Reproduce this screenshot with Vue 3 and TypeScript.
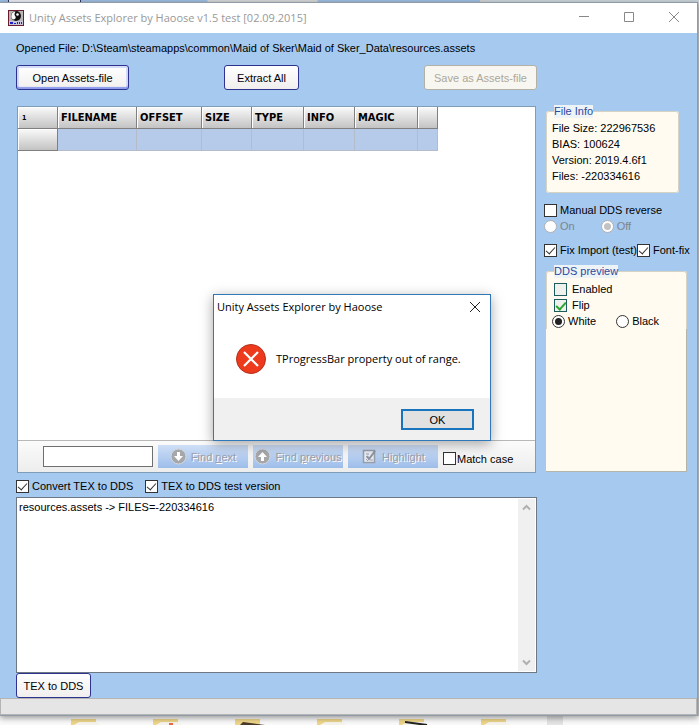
<script setup lang="ts">
import { ref } from 'vue'

interface Column {
  title: string
  width: number
}

const openedFile = 'D:\\Steam\\steamapps\\common\\Maid of Sker\\Maid of Sker_Data\\resources.assets'

const columns: Column[] = [
  { title: 'FILENAME', width: 79 },
  { title: 'OFFSET', width: 65 },
  { title: 'SIZE', width: 50 },
  { title: 'TYPE', width: 52 },
  { title: 'INFO', width: 51 },
  { title: 'MAGIC', width: 63 },
  { title: '', width: 20 },
]

const fileInfo: string[] = [
  'File Size: 222967536',
  'BIAS: 100624',
  'Version: 2019.4.6f1',
  'Files: -220334616',
]

const folders = ['plain', 'red', 'dark', 'plain', 'ink', 'plain']

const search = ref('')
const matchCase = ref(false)
const manualReverse = ref(false)
const reverseMode = ref('off')
const fixImport = ref(true)
const fontFix = ref(true)
const previewEnabled = ref(false)
const previewFlip = ref(true)
const previewBackground = ref('white')
const convertTex = ref(true)
const texTest = ref(true)
const log = ref('resources.assets -> FILES=-220334616')
const errorOpen = ref(true)
</script>

<template>
  <div class="desktop">
    <div class="behind-top" aria-hidden="true">
      <span class="behind-button"></span>
      <span class="behind-button pale"></span>
      <span class="behind-edge"></span>
    </div>

    <main class="window">
      <header class="titlebar">
        <svg class="app-icon" width="16" height="16" viewBox="0 0 16 16" aria-hidden="true">
          <rect x="0.5" y="0.5" width="15" height="15" fill="#b9b4b6" stroke="#6b1c28" />
          <circle cx="8" cy="6" r="5" fill="#111" />
          <path d="M7.500 1.500A4.500 4.500 0 0 0 5 9.500Q8.500 9 7.500 6.500Q5.500 4.500 7.500 1.500Z" fill="#fff" />
          <circle cx="9.500" cy="4.500" r="1.300" fill="#fff" />
          <rect x="1" y="11" width="14" height="4" fill="#c8c6dc" />
          <path d="M2 12h3v2h-3zM6 13h2v1h-2zM9 12h1v2h-1zM11 12h1v2h-1zM13 12h1v2h-1z" fill="#1a22c8" />
        </svg>
        <h1>Unity Assets Explorer by Haoose v1.5 test [02.09.2015]</h1>
        <div class="window-controls">
          <button type="button" aria-label="Minimize">
            <svg width="12" height="12" viewBox="0 0 12 12"><path d="M1 5.500h10" /></svg>
          </button>
          <button type="button" aria-label="Maximize">
            <svg width="12" height="12" viewBox="0 0 12 12"><path d="M1.500 1.500h9v9h-9z" /></svg>
          </button>
          <button type="button" aria-label="Close">
            <svg width="12" height="12" viewBox="0 0 12 12"><path d="M1 1l10 10M11 1L1 11" /></svg>
          </button>
        </div>
      </header>

      <div class="client">
        <section class="main-column">
          <p class="opened">Opened File: {{ openedFile }}</p>

          <div class="file-actions">
            <button type="button" class="xp-button wide focused">Open Assets-file</button>
            <button type="button" class="xp-button medium">Extract All</button>
            <button type="button" class="xp-button wide" disabled>Save as Assets-file</button>
          </div>

          <div class="asset-panel">
            <div class="table-area">
              <table>
                <colgroup>
                  <col :style="{ width: '40px' }" />
                  <col v-for="(col, i) in columns" :key="i" :style="{ width: col.width + 'px' }" />
                </colgroup>
                <thead>
                  <tr>
                    <th class="index" scope="col">1</th>
                    <th v-for="(col, i) in columns" :key="i" scope="col">{{ col.title }}</th>
                  </tr>
                </thead>
                <tbody>
                  <tr>
                    <th scope="row"></th>
                    <td v-for="(col, i) in columns" :key="i"></td>
                  </tr>
                </tbody>
              </table>
            </div>

            <div class="find-bar">
              <input v-model="search" class="search" type="text" aria-label="Find text" />
              <button type="button" class="tool" disabled>
                <svg width="17" height="17" viewBox="0 0 17 17" aria-hidden="true">
                  <circle cx="8.500" cy="8.500" r="7.500" fill="#a5a7ab" stroke="#d6d8dc" />
                  <path d="M7 4h3v4h3l-4.500 5L4 8h3z" fill="#fff" />
                </svg>
                <span>Find <u>n</u>ext</span>
              </button>
              <button type="button" class="tool" disabled>
                <svg width="17" height="17" viewBox="0 0 17 17" aria-hidden="true">
                  <circle cx="8.500" cy="8.500" r="7.500" fill="#a5a7ab" stroke="#d6d8dc" />
                  <path d="M7 13h3V9h3L8.500 4L4 9h3z" fill="#fff" />
                </svg>
                <span>Find <u>p</u>revious</span>
              </button>
              <button type="button" class="tool" disabled>
                <svg width="17" height="17" viewBox="0 0 17 17" aria-hidden="true">
                  <path d="M2.500 2.500h11v12h-11z" fill="#e6ebf4" stroke="#999da6" stroke-width="1.500" />
                  <path d="M5 6h3M5 9h2M9 12h3M5 11l2 2" stroke="#9a9ea8" fill="none" />
                  <path d="M6 8l2 3L14 3" stroke="#8d929c" stroke-width="2" fill="none" />
                </svg>
                <span>Highlight</span>
              </button>
              <label class="check tight match">
                <input v-model="matchCase" type="checkbox" />
                <span>Match case</span>
              </label>
            </div>
          </div>

          <div class="convert-options">
            <label class="check">
              <input v-model="convertTex" type="checkbox" />
              <span>Convert TEX to DDS</span>
            </label>
            <label class="check">
              <input v-model="texTest" type="checkbox" />
              <span>TEX to DDS test version</span>
            </label>
          </div>

          <div class="log">
            <textarea v-model="log" aria-label="Log"></textarea>
            <div class="scrollbar">
              <button type="button" aria-label="Scroll up">
                <svg width="9" height="7" viewBox="0 0 9 7"><path d="M1 5.500L4.500 2L8 5.500" /></svg>
              </button>
              <button type="button" aria-label="Scroll down">
                <svg width="9" height="7" viewBox="0 0 9 7"><path d="M1 1.500L4.500 5L8 1.500" /></svg>
              </button>
            </div>
          </div>

          <button type="button" class="xp-button small">TEX to DDS</button>
        </section>

        <aside class="side-column">
          <fieldset class="group info">
            <legend>File Info</legend>
            <p v-for="line in fileInfo" :key="line">{{ line }}</p>
          </fieldset>

          <div class="side-options">
            <label class="check">
              <input v-model="manualReverse" type="checkbox" />
              <span>Manual DDS reverse</span>
            </label>
            <div class="radios">
              <label class="check">
                <input v-model="reverseMode" type="radio" name="reverse" value="on" disabled />
                <span>On</span>
              </label>
              <label class="check">
                <input v-model="reverseMode" type="radio" name="reverse" value="off" disabled />
                <span>Off</span>
              </label>
            </div>
            <div class="fixes">
              <label class="check">
                <input v-model="fixImport" type="checkbox" />
                <span>Fix Import (test)</span>
              </label>
              <label class="check">
                <input v-model="fontFix" type="checkbox" />
                <span>Font-fix</span>
              </label>
            </div>
          </div>

          <fieldset class="group preview">
            <legend>DDS preview</legend>
            <label class="check themed">
              <input v-model="previewEnabled" type="checkbox" />
              <span>Enabled</span>
            </label>
            <label class="check themed">
              <input v-model="previewFlip" type="checkbox" />
              <span>Flip</span>
            </label>
            <div class="backgrounds">
              <label class="check">
                <input v-model="previewBackground" type="radio" name="background" value="white" />
                <span>White</span>
              </label>
              <label class="check">
                <input v-model="previewBackground" type="radio" name="background" value="black" />
                <span>Black</span>
              </label>
            </div>
          </fieldset>
          <div class="preview-canvas"></div>
        </aside>
      </div>

      <footer class="statusbar"></footer>

      <div v-if="errorOpen" class="dialog" role="alertdialog" aria-labelledby="error-title">
        <div class="dialog-title">
          <h2 id="error-title">Unity Assets Explorer by Haoose</h2>
          <button type="button" aria-label="Close" @click="errorOpen = false">
            <svg width="12" height="12" viewBox="0 0 12 12"><path d="M1 1l10 10M11 1L1 11" /></svg>
          </button>
        </div>
        <div class="dialog-body">
          <svg width="30" height="30" viewBox="0 0 30 30" aria-hidden="true">
            <circle cx="15" cy="15" r="14.500" fill="#ee3a1c" stroke="#b3301c" />
            <path d="M8 8l14 14M22 8L8 22" stroke="#fff" stroke-width="2.200" />
          </svg>
          <p>TProgressBar property out of range.</p>
        </div>
        <div class="dialog-footer">
          <button type="button" @click="errorOpen = false">OK</button>
        </div>
      </div>
    </main>

    <div class="behind-bottom" aria-hidden="true">
      <svg v-for="(kind, i) in folders" :key="i" width="32" height="6" viewBox="0 0 32 6">
        <path d="M0 0h25v6h-25z" fill="#efd68a" />
        <path v-if="kind === 'dark'" d="M5 6L8 3L30 6z" fill="#4a3a2a" />
        <path v-else d="M3 6L8 3L25 3L30 6z" fill="#f7f4ee" />
        <path v-if="kind === 'red'" d="M16 5h4" stroke="#e8684a" stroke-width="2" />
        <path v-if="kind === 'ink'" d="M6 3L28 6" stroke="#222" stroke-width="2" />
      </svg>
    </div>
  </div>
</template>

<style>
body {
  margin: 0;
  background: #c9ced2;
}
</style>

<style scoped>
* {
  box-sizing: border-box;
}

.desktop {
  min-height: 100vh;
  display: flex;
  flex-direction: column;
  font-family: "Liberation Sans", Arial, sans-serif;
  font-size: 11px;
  line-height: 16px;
  color: #000;
}

h1,
h2,
p {
  margin: 0;
  font-size: inherit;
  font-weight: 400;
}

button,
input,
textarea {
  font: inherit;
  color: inherit;
}

.behind-top {
  height: 2px;
  display: flex;
  gap: 126px;
  padding-left: 8px;
  background: linear-gradient(90deg, #9dbce0 480px, #c9d3d8 480px);
}

.behind-button {
  width: 73px;
  background: #e8e9f0;
  border: solid #34365c;
  border-width: 0 1px;
}

.behind-button.pale {
  width: 111px;
  background: #d3d5d5;
  border-color: #c8c8c0;
}

.behind-edge {
  width: 6px;
  margin-left: 36px;
  background: #d0d0d0;
}

.window {
  position: relative;
  flex: 1;
  display: flex;
  flex-direction: column;
  margin-right: 1px;
  border: 1px solid #8f9ba6;
  border-left-width: 0;
  background: #a6c9ef;
  z-index: 1;
  box-shadow: 0 2px 6px rgba(0, 0, 0, 0.4);
}

.titlebar {
  display: flex;
  align-items: center;
  height: 30px;
  padding-left: 8px;
  background: #fff;
}

.titlebar h1 {
  flex: 1;
  margin-left: 5px;
  font-family: "Open Sans", "Noto Sans", sans-serif;
  font-size: 11px;
  color: #999;
}

.window-controls {
  display: flex;
  margin-right: 1px;
}

.window-controls button {
  width: 45px;
  height: 30px;
  padding: 0 0 2px;
  border: 0;
  background: none;
}

.window-controls svg,
.dialog-title svg {
  display: block;
  margin: auto;
  fill: none;
  stroke: #888;
}

.client {
  flex: 1;
  display: flex;
  gap: 9px;
  padding: 7px 10px 0 16px;
}

.main-column {
  flex: 1;
  min-width: 0;
  display: flex;
  flex-direction: column;
}

.file-actions {
  display: flex;
  justify-content: space-between;
  margin: 9px 0 16px;
}

.xp-button {
  height: 25px;
  padding: 0;
  border: 1px solid #2f3390;
  border-radius: 3px;
  background: linear-gradient(#fff, #f1efee);
}

.xp-button.wide {
  width: 113px;
}

.xp-button.medium {
  width: 75px;
  margin-right: 30px;
}

.xp-button.small {
  width: 75px;
  flex: none;
}

.xp-button.focused {
  box-shadow: inset 0 -2px 1px #8d9bea, inset 0 0 0 2px #d5dcf8;
}

.xp-button:disabled {
  color: #aca899;
  border-color: #b3b0a6;
  background: #f8f6f1;
}

.asset-panel {
  flex: 1;
  display: flex;
  flex-direction: column;
  margin: 0 1px;
  border: 1px solid #7f9db9;
  background: #fff;
}

.table-area {
  flex: 1;
}

table {
  width: 420px;
  table-layout: fixed;
  border-collapse: separate;
  border-spacing: 0;
}

th,
td {
  height: 22px;
  padding: 0 0 0 3px;
  text-align: left;
  line-height: 16px;
}

th {
  border: solid #808080;
  border-width: 0 1px 1px 0;
  box-shadow: inset 1px 1px #fff;
  background: linear-gradient(#fafafa, #c3c3c3);
  font-family: "DejaVu Sans Condensed", "Noto Sans", sans-serif;
  font-size: 11px;
  font-weight: 700;
}

th.index {
  padding-left: 4px;
  font-size: 7px;
}

td {
  border: solid #b4bccb;
  border-width: 0 1px 1px 0;
  background: #b6caea;
}

.find-bar {
  height: 32px;
  display: flex;
  align-items: center;
  gap: 5px;
  padding-left: 25px;
  border-top: 1px solid #b8b8b8;
  background: linear-gradient(#fbfbfb, #ededed);
}

.search {
  width: 110px;
  height: 21px;
  padding: 0 3px;
  border: 1px solid #6f6f6f;
  background: #fff;
}

.tool {
  width: 90px;
  height: 23px;
  display: flex;
  align-items: center;
  justify-content: center;
  gap: 4px;
  padding: 0;
  border: 0;
  background: linear-gradient(#cfdff6, #9dbdea);
  color: #9b9fa9;
  text-shadow: 1px 1px #fff;
  white-space: nowrap;
}

.tool svg {
  flex: none;
}

.check {
  display: flex;
  align-items: center;
  gap: 3px;
  height: 16px;
  white-space: nowrap;
}

.check.tight {
  gap: 1px;
}

.check.match {
  margin-top: 4px;
}

.check input {
  appearance: none;
  position: relative;
  flex: none;
  width: 13px;
  height: 13px;
  margin: 0;
  border: 1px solid #333;
  background: #fff;
}

.check input[type="checkbox"]:checked::after {
  content: "";
  position: absolute;
  left: 3px;
  top: 0;
  width: 4px;
  height: 8px;
  border: solid #333;
  border-width: 0 1px 1px 0;
  transform: rotate(42deg);
}

.check input[type="radio"] {
  border-radius: 50%;
}

.check input[type="radio"]:checked::after {
  content: "";
  position: absolute;
  inset: 2px;
  border-radius: 50%;
  background: #222;
}

.check input:disabled {
  border-color: #b0b0b0;
}

.check input[type="radio"]:disabled:checked::after {
  background: #c2c2c2;
}

.check input:disabled + span {
  color: #7d848c;
}

.check.themed input {
  border-color: #1c5c5c;
  background: #eef1ec;
}

.check.themed input:checked::after {
  border-color: #2ea52e;
  border-width: 0 2px 2px 0;
}

.convert-options {
  display: flex;
  gap: 12px;
  margin: 5px 0 3px;
}

.log {
  display: flex;
  height: 176px;
  border: 1px solid #6e7885;
  background: #fff;
}

.log textarea {
  flex: 1;
  min-width: 0;
  padding: 1px 2px;
  border: 0;
  outline: 0;
  resize: none;
  overflow: hidden;
  background: none;
}

.scrollbar {
  width: 17px;
  margin: 1px;
  display: flex;
  flex-direction: column;
  justify-content: space-between;
  background: #f0f0f0;
}

.scrollbar button {
  height: 17px;
  padding: 0;
  border: 0;
  background: none;
}

.scrollbar svg {
  display: block;
  margin: auto;
  fill: none;
  stroke: #b0b0b0;
  stroke-width: 2;
}

.side-column {
  width: 141px;
  display: flex;
  flex-direction: column;
  padding: 65px 0 226px;
}

.group {
  min-width: 0;
  margin: 0;
  border: 1px solid #d5d3c4;
  border-radius: 3px;
  background: #fffbf0;
}

.group legend {
  margin-left: 2px;
  padding: 0;
  line-height: 13px;
  color: #2a4a9e;
  background: #eef3f6;
}

.group.info {
  width: 133px;
  padding: 2px 5px 8px;
}

.side-options {
  margin: 9px 0 7px -2px;
}

.radios {
  display: flex;
  gap: 26px;
}

.fixes {
  display: flex;
  margin-top: 8px;
}

.group.preview {
  padding: 3px 7px 0;
  border-bottom: 0;
  border-radius: 3px 3px 0 0;
}

.group.preview legend {
  margin-left: 0;
}

.preview .check {
  gap: 5px;
}

.backgrounds {
  display: flex;
  gap: 20px;
  margin-left: -2px;
}

.backgrounds .check {
  gap: 3px;
}

.preview-canvas {
  flex: 1;
  border: solid #b4b4a8;
  border-width: 0 1px 1px 0;
  background: #fffbf0;
}

.statusbar {
  height: 17px;
  border: 1px solid #b4b4b4;
  background: #e5e5e5;
}

.dialog {
  position: absolute;
  left: 213px;
  top: 291px;
  width: 278px;
  border: 1px solid #3078b8;
  background: #fff;
  box-shadow: 0 3px 12px rgba(0, 0, 0, 0.35);
}

.dialog-title {
  display: flex;
  justify-content: space-between;
  padding: 4px 8px 0 3px;
}

.dialog-title h2 {
  font-family: "Open Sans", "Noto Sans", sans-serif;
  font-size: 11px;
}

.dialog-title button {
  width: 14px;
  height: 16px;
  padding: 0;
  border: 0;
  background: none;
}

.dialog-title svg {
  stroke: #222;
}

.dialog-body {
  display: flex;
  align-items: center;
  gap: 10px;
  height: 83px;
  padding: 5px 22px 0;
}

.dialog-body p {
  font-family: "Open Sans", "Noto Sans", sans-serif;
  white-space: nowrap;
}

.dialog-footer {
  display: flex;
  justify-content: flex-end;
  padding: 11px 16px 10px;
  background: #f0f0f0;
}

.dialog-footer button {
  width: 73px;
  height: 21px;
  padding: 0;
  border: 2px solid #1874bc;
  background: #e1e1e1;
}

.behind-bottom {
  height: 9px;
  display: flex;
  gap: 50px;
  padding: 3px 0 0 71px;
  background:
    linear-gradient(90deg, transparent 547px, #e4e4e4 547px, #e4e4e4 563px, transparent 563px),
    #fafafa;
}
</style>
